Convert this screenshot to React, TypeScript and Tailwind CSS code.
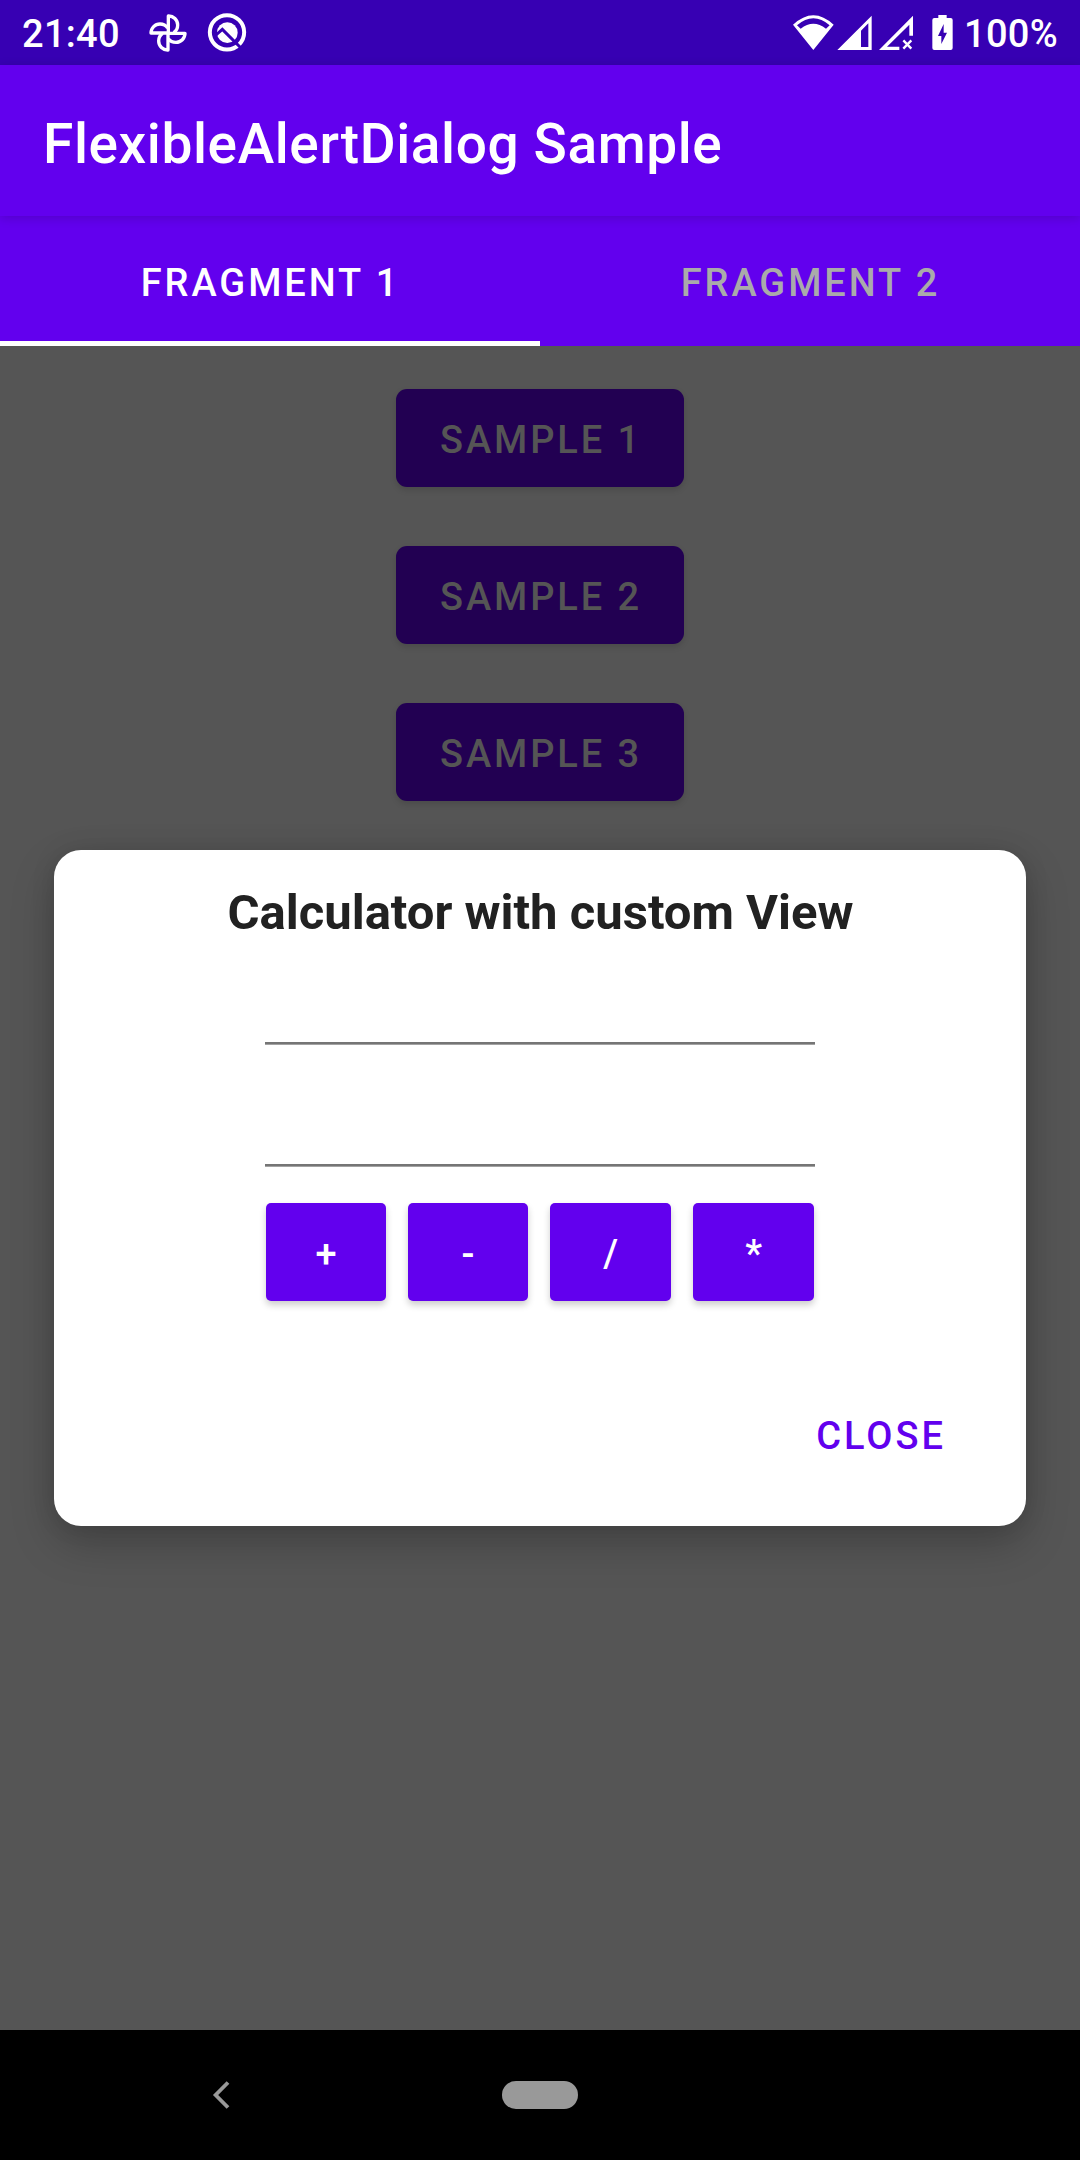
import React from "react";

function PinwheelIcon() {
  return (
    <svg className="h-[40px] w-[40px]" viewBox="445 37 120 120" fill="none" stroke="white" strokeWidth="10" strokeLinejoin="round">
      <path d="M506 97V46A27 27 0 0 1 534 73Q534 88 522 96" />
      <path d="M505 98H556A27 27 0 0 1 529 125Q514 125 506 114" />
      <path d="M505 97V148A27 27 0 0 1 477 121Q477 106 489 98" />
      <path d="M505 97H454A27 27 0 0 1 481 70Q496 70 504 82" />
    </svg>
  );
}

function QIcon() {
  return (
    <svg className="h-[40px] w-[40px]" viewBox="622 38 120 120" fill="none">
      <circle cx="682" cy="96" r="51.5" stroke="white" strokeWidth="12" />
      <circle cx="683" cy="97" r="31" fill="white" />
      <path d="M649 104L668 87L724 143" stroke="#3700b3" strokeWidth="9" />
    </svg>
  );
}

function StatusIcons() {
  return (
    <svg className="h-[38px] w-[162px]" viewBox="36 42 486 114" fill="white">
      <path fillRule="evenodd" d="M100 150L39 74Q100 17 161 74ZM51 76L62 86Q100 57 138 86L149 76Q100 34 51 76Z" />
      <path fillRule="evenodd" d="M172 150L275 47V150ZM243 92V141H265V70Z" />
      <path d="M297 150L399 47V107H388V74L321 140H358V150Z" />
      <path d="M370 121L394 146M394 121L370 146" stroke="white" strokeWidth="7" />
      <path fillRule="evenodd" d="M475 45H500V54H512Q518 54 518 60V144Q518 150 512 150H463Q457 150 457 144V60Q457 54 463 54H475ZM491 72L474 108H484V132L501 98H491Z" />
    </svg>
  );
}

function StatusBar() {
  return (
    <header className="flex h-[65px] items-center bg-[#3700b3] text-[38px] leading-[65px] font-medium tracking-[0.3px] text-white">
      <span className="ml-[22px] w-[126px] pt-[3px]">21:40</span>
      <PinwheelIcon />
      <span className="ml-[19px] flex">
        <QIcon />
      </span>
      <span className="ml-auto">
        <StatusIcons />
      </span>
      <span className="mr-[20px] ml-[10px] w-[96px] pt-[3px] whitespace-nowrap">100%</span>
    </header>
  );
}

function Tab({ label, active }: { label: string; active?: boolean }) {
  return (
    <div
      className={
        active
          ? "flex flex-1 items-center justify-center border-b-[5px] border-white pt-[10px] pl-[1px] text-white"
          : "flex flex-1 items-center justify-center border-b-[5px] border-transparent pt-[10px] pl-[1px] text-[#aaaaaa]"
      }
    >
      {label}
    </div>
  );
}

function Field({ label }: { label: string }) {
  return (
    <div
      role="textbox"
      aria-label={label}
      className="h-[122px] border-b border-[#a3a3a3] shadow-[inset_0_-2px_0_#757575]"
    />
  );
}

function Dialog() {
  return (
    <section
      role="dialog"
      className="absolute top-[850px] left-[54px] flex h-[676px] w-[972px] flex-col items-center rounded-[27px] bg-white shadow-[0_18px_44px_rgba(0,0,0,0.22),0_0_24px_rgba(0,0,0,0.1)]"
    >
      <h2 className="mt-[34px] pl-[1px] text-[49px] leading-[58px] font-bold text-[#212121]">Calculator with custom View</h2>
      <div className="-mt-[19px] w-[550px]">
        <Field label="First number" />
        <Field label="Second number" />
      </div>
      <div className="mt-[36px] grid w-[548px] grid-cols-[120px_120px_121px_121px] justify-between">
        {["+", "-", "/", "*"].map((op) => (
          <button
            key={op}
            className="h-[98px] rounded-[5px] bg-[#6200ee] pt-[5px] pl-[3px] text-[38px] font-medium tracking-[2.9px] text-white shadow-[0_4px_7px_rgba(0,0,0,0.2)]"
          >
            {op}
          </button>
        ))}
      </div>
      <button className="mt-[105px] mr-[80px] self-end text-[38px] leading-[60px] font-medium tracking-[3px] text-[#6200ee]">
        CLOSE
      </button>
    </section>
  );
}

export default function App() {
  return (
    <div className="relative flex h-[2160px] w-[1080px] flex-col overflow-hidden bg-[#555555] font-['Roboto',sans-serif]">
      <StatusBar />
      <div className="relative z-[1] flex h-[151px] items-center bg-[#6200ee] pt-[7px] pl-[43px] text-[55px] font-medium tracking-[0.6px] text-white shadow-[0_2px_10px_rgba(0,0,0,0.16)]">
        FlexibleAlertDialog Sample
      </div>
      <nav className="flex h-[130px] bg-[#6200ee] text-[38px] font-medium tracking-[2.95px]">
        <Tab label="FRAGMENT 1" active />
        <Tab label="FRAGMENT 2" />
      </nav>
      <main className="flex flex-1 flex-col items-center gap-[59px] pt-[43px]">
        {["SAMPLE 1", "SAMPLE 2", "SAMPLE 3"].map((label) => (
          <button
            key={label}
            className="h-[98px] w-[288px] rounded-[11px] bg-[#220052] pt-[5px] pl-[2px] text-[38px] font-medium tracking-[2.9px] text-[#555555] shadow-[0_3px_6px_rgba(0,0,0,0.14)]"
          >
            {label}
          </button>
        ))}
      </main>
      <footer className="grid h-[130px] grid-cols-[502px_76px_502px] items-center bg-black">
        <svg className="ml-[212px] h-[30px] w-[20px]" viewBox="0 0 20 30" fill="none" stroke="#999999" strokeWidth="3.8">
          <path d="M16 2.5L3.6 15L16 27.5" />
        </svg>
        <span className="h-[28px] rounded-full bg-[#999999]" />
      </footer>
      <Dialog />
    </div>
  );
}
